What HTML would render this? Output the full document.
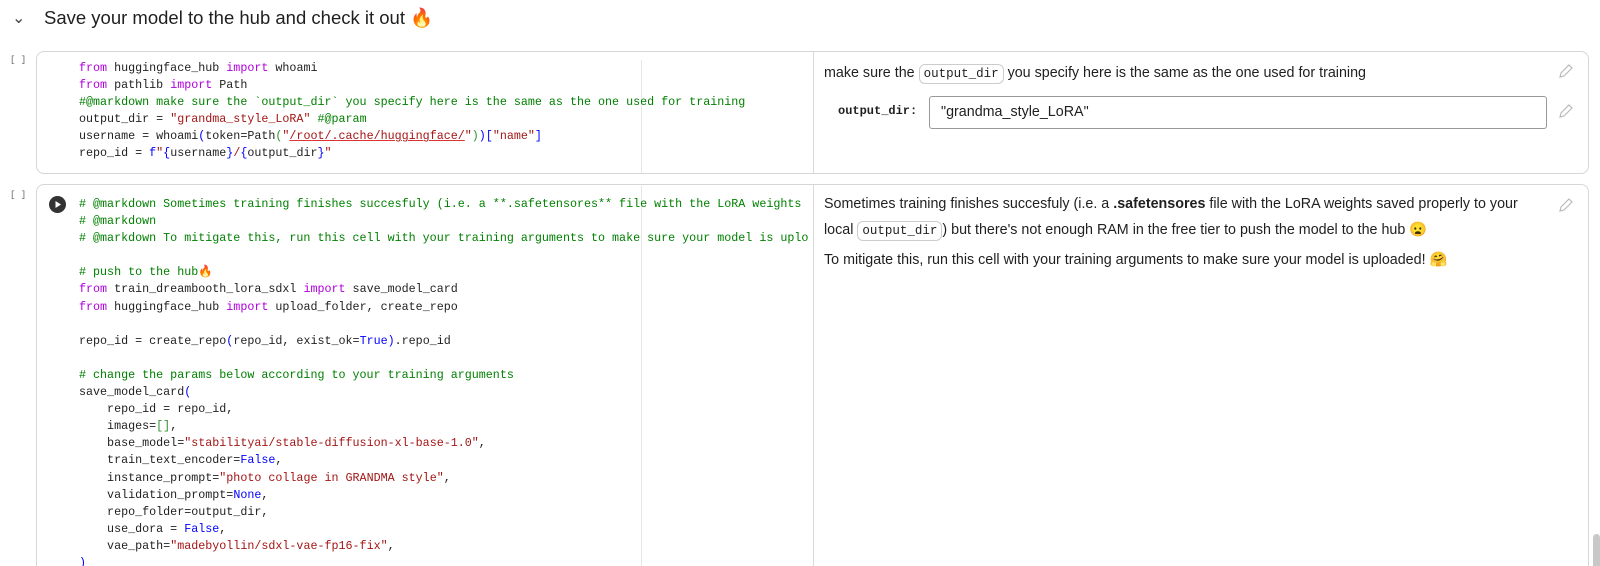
<!DOCTYPE html>
<html style="width:1600px;height:566px;overflow:hidden"><head><meta charset="utf-8"><style>
*{margin:0;padding:0;box-sizing:border-box}
body{width:1600px;height:566px;overflow:hidden;background:#fff;position:relative;font-family:"Liberation Sans",sans-serif;color:#1f1f1f}
.a{position:absolute;white-space:pre}
.code{position:absolute;font-family:"Liberation Mono",monospace;font-size:11.7px;line-height:17.1px;white-space:pre;color:#1f1f1f}
.k{color:#af00db}.s{color:#a31515}.c{color:#008000}.b{color:#0000ff}.g{color:#319331}
.cell{position:absolute;border:1px solid #d6d6d6;border-radius:8px;background:#fff}
.div{position:absolute;width:1px;background:#dadada}
.ruler{position:absolute;width:1px;background:#e6e6e6}
.md{position:absolute;font-size:14.3px;color:#1f1f1f;white-space:nowrap}
.ic{display:inline-block;font-family:"Liberation Mono",monospace;font-size:12.5px;border:1px solid #ccc;border-radius:6px;padding:0 4px;line-height:18px}
.br{position:absolute;font-family:"Liberation Mono",monospace;font-size:9px;color:#666}
</style></head><body>
<div class="a" style="left:12px;top:8px;font-size:16px;color:#444">&#8964;</div>
<div class="a" style="left:44px;top:7px;font-size:18.5px;color:#1f1f1f">Save your model to the hub and check it out <span style="color:#f4511e">🔥</span></div>

<div class="br" style="left:10px;top:55px">[ ]</div>
<div class="cell" style="left:36px;top:51px;width:1553px;height:123px"></div>
<div class="ruler" style="left:641px;top:60px;height:113px"></div>
<div class="div" style="left:813px;top:52px;height:121px"></div>
<div class="code" style="left:79px;top:60px"><span class="k">from</span> huggingface_hub <span class="k">import</span> whoami
<span class="k">from</span> pathlib <span class="k">import</span> Path
<span class="c">#@markdown make sure the `output_dir` you specify here is the same as the one used for training</span>
output_dir = <span class="s">"grandma_style_LoRA"</span> <span class="c">#@param</span>
username = whoami<span class="b">(</span>token=Path<span class="g">(</span><span class="s">"<span style="text-decoration:underline;text-decoration-color:#d33">/root/.cache/huggingface/</span>"</span><span class="g">)</span><span class="b">)[</span><span class="s">"name"</span><span class="b">]</span>
repo_id = <span class="b">f</span><span class="s">"</span><span class="b">{</span>username<span class="b">}</span><span class="s">/</span><span class="b">{</span>output_dir<span class="b">}</span><span class="s">"</span></div>
<div class="md" style="left:824px;top:64px">make sure the <span class="ic">output_dir</span> you specify here is the same as the one used for training</div>
<div class="a" style="left:838px;top:104px;font-family:'Liberation Mono',monospace;font-size:12px;font-weight:bold">output_dir:</div>
<div style="position:absolute;left:929px;top:96px;width:618px;height:33px;border:1px solid #999;border-radius:3px"></div>
<div class="md" style="left:941px;top:104px">"grandma_style_LoRA"</div>
<svg style="position:absolute;left:1557px;top:64px" width="16" height="16" viewBox="0 0 16 16"><path d="M3 13l1-4 8-8 3 3-8 8z" fill="none" stroke="#bbb" stroke-width="1.2"/></svg>
<svg style="position:absolute;left:1557px;top:104px" width="16" height="16" viewBox="0 0 16 16"><path d="M3 13l1-4 8-8 3 3-8 8z" fill="none" stroke="#bbb" stroke-width="1.2"/></svg>

<div class="br" style="left:10px;top:190px">[ ]</div>
<div class="cell" style="left:36px;top:184px;width:1553px;height:382px;border-bottom:none;border-radius:8px 8px 0 0"></div>
<div class="ruler" style="left:641px;top:186px;height:380px"></div>
<div class="div" style="left:813px;top:185px;height:381px"></div>
<svg style="position:absolute;left:49px;top:196px" width="17" height="17" viewBox="0 0 17 17"><circle cx="8.5" cy="8.5" r="8.5" fill="#333"/><path d="M6.5 5v7l5.5-3.5z" fill="#fff"/></svg>
<div class="code" style="left:79px;top:196px"><span class="c"># @markdown Sometimes training finishes succesfuly (i.e. a **.safetensores** file with the LoRA weights</span>
<span class="c"># @markdown</span>
<span class="c"># @markdown To mitigate this, run this cell with your training arguments to make sure your model is uplo</span>

<span class="c"># push to the hub</span><span style="color:#f4511e">🔥</span>
<span class="k">from</span> train_dreambooth_lora_sdxl <span class="k">import</span> save_model_card
<span class="k">from</span> huggingface_hub <span class="k">import</span> upload_folder, create_repo

repo_id = create_repo<span class="b">(</span>repo_id, exist_ok=<span class="b">True</span><span class="b">)</span>.repo_id

<span class="c"># change the params below according to your training arguments</span>
save_model_card<span class="b">(</span>
    repo_id = repo_id,
    images=<span class="g">[]</span>,
    base_model=<span class="s">"stabilityai/stable-diffusion-xl-base-1.0"</span>,
    train_text_encoder=<span class="b">False</span>,
    instance_prompt=<span class="s">"photo collage in GRANDMA style"</span>,
    validation_prompt=<span class="b">None</span>,
    repo_folder=output_dir,
    use_dora = <span class="b">False</span>,
    vae_path=<span class="s">"madebyollin/sdxl-vae-fp16-fix"</span>,
<span class="b">)</span></div>
<div class="md" style="left:824px;top:196px">Sometimes training finishes succesfuly (i.e. a <b>.safetensores</b> file with the LoRA weights saved properly to your</div>
<div class="md" style="left:824px;top:221px">local <span class="ic">output_dir</span>) but there's not enough RAM in the free tier to push the model to the hub 😦</div>
<div class="md" style="left:824px;top:252px">To mitigate this, run this cell with your training arguments to make sure your model is uploaded! 🤗</div>
<svg style="position:absolute;left:1557px;top:198px" width="16" height="16" viewBox="0 0 16 16"><path d="M3 13l1-4 8-8 3 3-8 8z" fill="none" stroke="#bbb" stroke-width="1.2"/></svg>
<div style="position:absolute;left:1593px;top:534px;width:7px;height:32px;background:#c8c8c8;border-radius:4px 4px 0 0"></div>
</body></html>
